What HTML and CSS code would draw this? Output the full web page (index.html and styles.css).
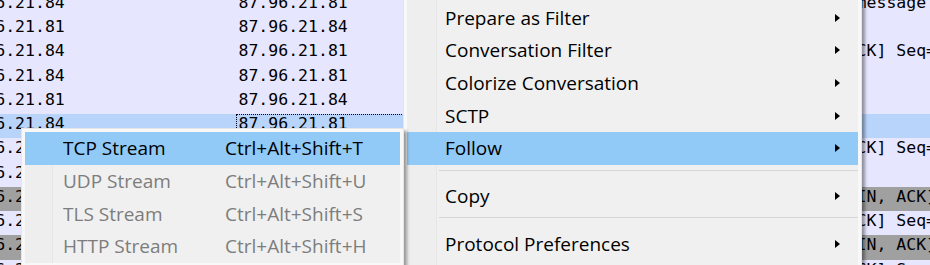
FILE: index.html
```html
<!DOCTYPE html>
<html lang="en">
<head>
    <meta charset="UTF-8">
    <meta name="viewport" content="width=device-width, initial-scale=1.0">
    <title>Packet List - Follow Menu</title>
    <link rel="stylesheet" href="styles.css">
</head>
<body>
    <!-- Packet list behind the menus -->
    <div class="packet-list">
        <div class="row"><span class="cell src">87.96.21.84</span><span class="cell dst">87.96.21.81</span><span class="cell proto">TLSv1.2</span><span class="cell info">TLS Handshake message</span></div>
        <div class="row"><span class="cell src">87.96.21.81</span><span class="cell dst">87.96.21.84</span><span class="cell proto">TLSv1.2</span><span class="cell info">Server Hello</span></div>
        <div class="row"><span class="cell src">87.96.21.84</span><span class="cell dst">87.96.21.81</span><span class="cell proto">TCP</span><span class="cell info">50412 &gt; 443 [ACK] Seq=518 Ack=1461 Win=65700 Len=0</span></div>
        <div class="row"><span class="cell src">87.96.21.84</span><span class="cell dst">87.96.21.81</span><span class="cell proto">TLSv1.2</span><span class="cell info">Client Hello</span></div>
        <div class="row"><span class="cell src">87.96.21.81</span><span class="cell dst">87.96.21.84</span><span class="cell proto">TLSv1.2</span><span class="cell info">Certificate</span></div>
        <div class="row selected"><span class="cell src">87.96.21.84</span><span class="cell dst">87.96.21.81</span><span class="cell proto">TLSv1.2</span><span class="cell info">Encrypted</span></div>
        <div class="row"><span class="cell src">87.96.21.84</span><span class="cell dst">87.96.21.81</span><span class="cell proto">TCP</span><span class="cell info">50412 &gt; 443 [ACK] Seq=861 Ack=2921 Win=65700 Len=0</span></div>
        <div class="row"><span class="cell src">87.96.21.81</span><span class="cell dst">87.96.21.84</span><span class="cell proto">TLSv1.2</span><span class="cell info">Alert</span></div>
        <div class="row flagged"><span class="cell src">87.96.21.84</span><span class="cell dst">87.96.21.81</span><span class="cell proto">TCP</span><span class="cell info">50412 &gt; 443 [FIN, ACK] Seq=892 Ack=2952 Win=65700 Len=0</span></div>
        <div class="row"><span class="cell src">87.96.21.81</span><span class="cell dst">87.96.21.84</span><span class="cell proto">TCP</span><span class="cell info">443 &gt; 50412 [ACK] Seq=2952 Ack=893 Win=64240 Len=0</span></div>
        <div class="row flagged"><span class="cell src">87.96.21.81</span><span class="cell dst">87.96.21.84</span><span class="cell proto">TCP</span><span class="cell info">443 &gt; 50412 [FIN, ACK] Seq=2952 Ack=893 Win=64240 Len=0</span></div>
        <div class="row"><span class="cell src">87.96.21.84</span><span class="cell dst">87.96.21.81</span><span class="cell proto">TCP</span><span class="cell info">50412 &gt; 443 [ACK] Seq=893 Ack=2953 Win=65700 Len=0</span></div>
    </div>

    <!-- Context menu -->
    <div class="menu main-menu">
        <div class="menu-body">
            <div class="item"><span class="label">Apply as Filter</span><span class="arrow"></span></div>
            <div class="item"><span class="label">Prepare as Filter</span><span class="arrow"></span></div>
            <div class="item"><span class="label">Conversation Filter</span><span class="arrow"></span></div>
            <div class="item"><span class="label">Colorize Conversation</span><span class="arrow"></span></div>
            <div class="item"><span class="label">SCTP</span><span class="arrow"></span></div>
            <div class="item active"><span class="label">Follow</span><span class="arrow"></span></div>
            <div class="separator"></div>
            <div class="item"><span class="label">Copy</span><span class="arrow"></span></div>
            <div class="separator"></div>
            <div class="item"><span class="label">Protocol Preferences</span><span class="arrow"></span></div>
            <div class="item"><span class="label">Decode As...</span></div>
        </div>
    </div>

    <!-- Follow submenu -->
    <div class="menu sub-menu">
        <div class="menu-body">
            <div class="item active"><span class="label">TCP Stream</span><span class="shortcut">Ctrl+Alt+Shift+T</span></div>
            <div class="item disabled"><span class="label">UDP Stream</span><span class="shortcut">Ctrl+Alt+Shift+U</span></div>
            <div class="item disabled"><span class="label">TLS Stream</span><span class="shortcut">Ctrl+Alt+Shift+S</span></div>
            <div class="item disabled"><span class="label">HTTP Stream</span><span class="shortcut">Ctrl+Alt+Shift+H</span></div>
        </div>
    </div>
</body>
</html>
```

FILE: styles.css
```css
/* General Styles */
body {
    margin: 0;
    width: 930px;
    height: 265px;
    overflow: hidden;
    position: relative;
    background-color: #e7e6ff;
    font-family: "Open Sans", "Noto Sans CJK KR", sans-serif;
}

/* Packet list */
.packet-list {
    margin-top: -7.25px;
    font-family: "DejaVu Sans Mono", monospace;
    font-size: 16.5px;
    line-height: 19px;
    color: #000;
}

.row {
    display: flex;
    height: 24.25px;
    background-color: #e7e6ff;
    white-space: nowrap;
}

.row.selected {
    background-color: #b9d4fb;
}

.row.flagged {
    background-color: #a0a0a0;
}

.cell {
    flex: none;
    box-sizing: border-box;
    height: 100%;
    padding: 0 2.5px;
    overflow: hidden;
}

.src {
    width: 283px;
    margin-left: -47px;
}

.dst {
    width: 300px;
}

.proto {
    width: 179px;
}

.info {
    flex: 1;
}

.selected .dst {
    outline: 1px dotted #000;
    outline-offset: -1px;
}

/* Menus */
.menu {
    position: absolute;
    padding: 3px;
    background-color: #f8f8f8;
    border: 1px solid #e6e6e6;
    box-shadow: 3px 3px 3px rgba(0, 0, 0, 0.38);
}

.main-menu {
    left: 403px;
    top: -35.4px;
}

.sub-menu {
    left: 21px;
    top: 127.95px;
}

.menu-body {
    background: linear-gradient(90deg, #eeeeee 0 29px, #e6e6e6 29px 30px, #f0f0f0 30px);
}

.main-menu .menu-body {
    width: 451px;
}

.sub-menu .menu-body {
    width: 375px;
    background: linear-gradient(90deg, #eeeeee 0 27px, #e6e6e6 27px 28px, #f0f0f0 28px);
}

.item {
    display: flex;
    align-items: center;
    height: 32.67px;
    padding-left: 38px;
    font-size: 19px;
    color: #000;
    white-space: nowrap;
}

.item.active {
    background-color: #91c9f7;
}

.item.disabled {
    color: #7d7d7d;
}

.item .label {
    flex: 1;
}

.sub-menu .item .label {
    flex: none;
    width: 162px;
}

.arrow {
    width: 0;
    height: 0;
    margin-right: 18px;
    border-left: 5px solid #000;
    border-top: 4.5px solid transparent;
    border-bottom: 4.5px solid transparent;
}

.separator {
    height: 1px;
    margin: 5px 0 9px 32px;
    background-color: #d6d6d6;
}
```
